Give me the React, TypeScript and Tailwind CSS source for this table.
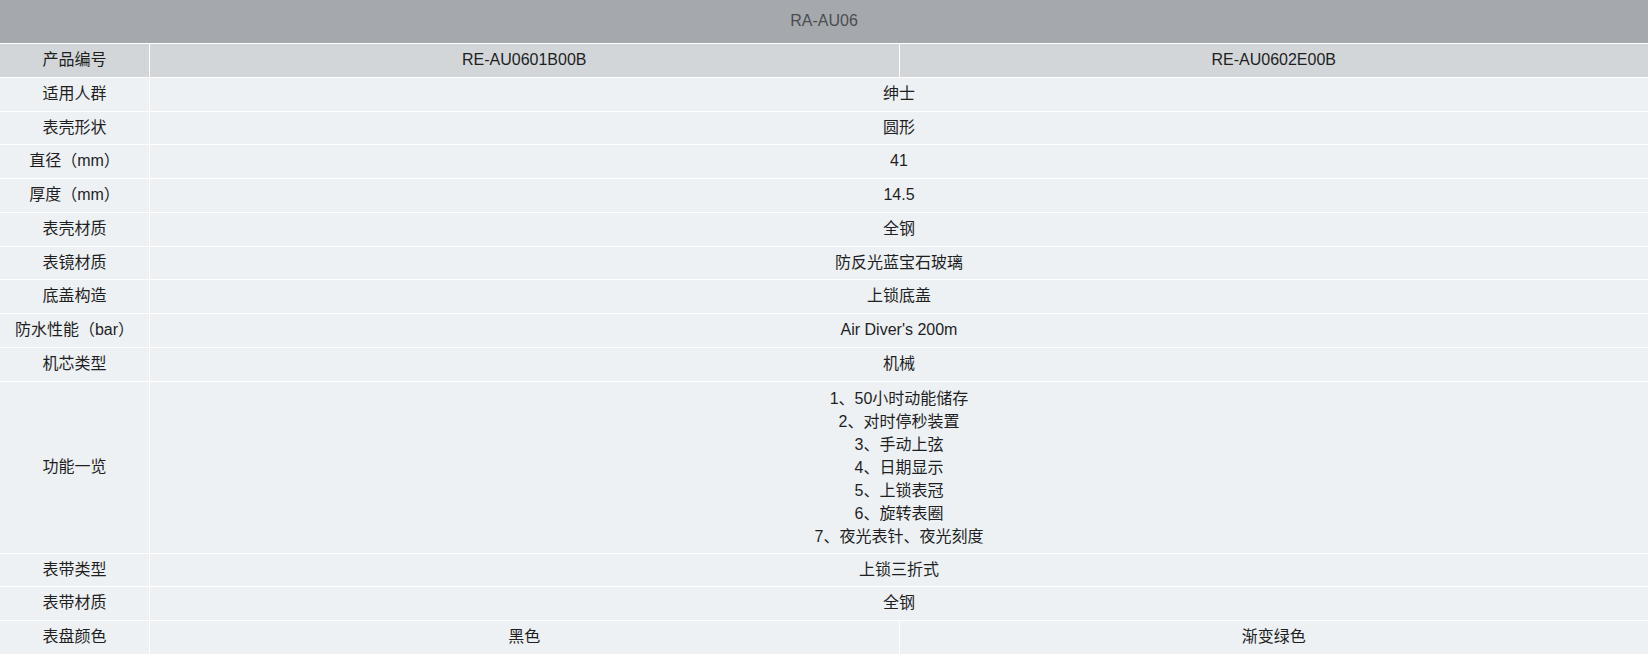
const ROWS: { label: string; values: string[] }[] = [
  { label: "适用人群", values: ["绅士"] },
  { label: "表壳形状", values: ["圆形"] },
  { label: "直径（mm）", values: ["41"] },
  { label: "厚度（mm）", values: ["14.5"] },
  { label: "表壳材质", values: ["全钢"] },
  { label: "表镜材质", values: ["防反光蓝宝石玻璃"] },
  { label: "底盖构造", values: ["上锁底盖"] },
  { label: "防水性能（bar）", values: ["Air Diver's 200m"] },
  { label: "机芯类型", values: ["机械"] },
];

const FEATURES = [
  "1、50小时动能储存",
  "2、对时停秒装置",
  "3、手动上弦",
  "4、日期显示",
  "5、上锁表冠",
  "6、旋转表圈",
  "7、夜光表针、夜光刻度",
];

const TAIL_ROWS: { label: string; values: string[] }[] = [
  { label: "表带类型", values: ["上锁三折式"] },
  { label: "表带材质", values: ["全钢"] },
  { label: "表盘颜色", values: ["黑色", "渐变绿色"] },
];

const cell = "bg-[#edf1f4] py-[5px] text-center flex items-center justify-center";

function SpecRow({ label, values }: { label: string; values: string[] }) {
  return (
    <>
      <div className={cell}>{label}</div>
      {values.length === 1 ? (
        <div className={`${cell} col-span-2`}>{values[0]}</div>
      ) : (
        values.map((v) => (
          <div key={v} className={cell}>{v}</div>
        ))
      )}
    </>
  );
}

export default function App() {
  return (
    <div
      className="w-[1649px] bg-white text-[16px] leading-[22.75px] text-[#1f1f1f]"
      style={{ fontFamily: '"Liberation Sans", "Noto Sans CJK SC", sans-serif' }}
    >
      <div className="grid grid-cols-[149px_1fr_1fr] gap-px pr-px">
        {/* Series header */}
        <div className="col-span-3 h-[43px] bg-[#a5a9ad] flex items-center justify-center text-[#4a4d50]">
          RA-AU06
        </div>

        {/* Product codes */}
        <div className="bg-[#d2d6d9] py-[5px] flex items-center justify-center">产品编号</div>
        <div className="bg-[#d2d6d9] py-[5px] flex items-center justify-center">RE-AU0601B00B</div>
        <div className="bg-[#d2d6d9] py-[5px] flex items-center justify-center">RE-AU0602E00B</div>

        {ROWS.map((r) => (
          <SpecRow key={r.label} {...r} />
        ))}

        {/* Feature list */}
        <div className={cell}>功能一览</div>
        <div className={`${cell} col-span-2 flex-col leading-[23px]`}>
          {FEATURES.map((f) => (
            <div key={f}>{f}</div>
          ))}
        </div>

        {TAIL_ROWS.map((r) => (
          <SpecRow key={r.label} {...r} />
        ))}
      </div>
    </div>
  );
}
